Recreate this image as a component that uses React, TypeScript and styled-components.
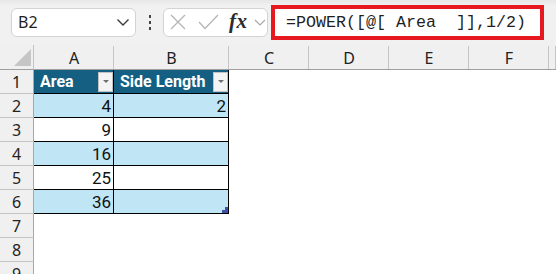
import { FC, Fragment } from "react";
import styled, { createGlobalStyle } from "styled-components";

const GlobalStyle = createGlobalStyle`
  html, body {
    margin: 0;
    padding: 0;
    background: #ffffff;
    overflow: hidden;
  }
`;

const Page = styled.div`
  width: 556px;
  height: 274px;
  overflow: hidden;
  display: flex;
  flex-direction: column;
  background: #ffffff;
  font-family: "Noto Sans", "Open Sans", sans-serif;
`;

const Toolbar = styled.div`
  height: 45px;
  flex: none;
  box-sizing: border-box;
  padding: 0 0 1px 11px;
  display: flex;
  align-items: center;
  background: linear-gradient(#e7e7e7 0, #f1f1f1 6px, #f1f1f1 100%);
`;

const NameBox = styled.div`
  width: 125px;
  height: 29px;
  box-sizing: border-box;
  border: 1px solid #d3d3d3;
  border-radius: 6px;
  background: #ffffff;
  display: flex;
  align-items: center;
  justify-content: space-between;
  padding: 0 5px 0 6px;
  font-size: 16px;
  color: #1f1f1f;
`;

const Kebab = styled.div`
  display: flex;
  flex-direction: column;
  gap: 3px;
  margin: 0 12px 0 13px;

  span {
    width: 2px;
    height: 3px;
    background: #444444;
  }
`;

const FormulaTools = styled.div`
  width: 105px;
  height: 29px;
  box-sizing: border-box;
  border: 1px solid #d3d3d3;
  border-radius: 6px;
  background: #ffffff;
  display: flex;
  align-items: center;
  padding-left: 6px;
`;

const ToolIcon = styled.svg<{ $gap: number }>`
  flex: none;
  margin-right: ${(p) => p.$gap}px;
`;

const FxLabel = styled.span`
  font-family: "Liberation Serif", "DejaVu Serif", serif;
  font-style: italic;
  font-weight: bold;
  font-size: 21px;
  line-height: 1;
  color: #2b2b2b;
  margin: 0 6px 2px 0;
  letter-spacing: 0.5px;
`;

const FormulaInput = styled.div`
  width: 273px;
  height: 35px;
  margin-left: 3px;
  box-sizing: border-box;
  border: 4px solid #e5191f;
  background: #ffffff;
  display: flex;
  align-items: center;
  padding-left: 11px;
  font-family: "Liberation Mono", "DejaVu Sans Mono", monospace;
  font-size: 16.67px;
  color: #1f1f1f;
  white-space: pre;
`;

const Sheet = styled.div`
  flex: 1;
  display: grid;
  grid-template-columns: 34px 80px 115px 80px 80px 80px 80px 1fr;
  grid-template-rows: 25px;
  grid-auto-rows: 24px;
  font-family: "Noto Sans", "Open Sans", sans-serif;
`;

const Corner = styled.div`
  box-sizing: border-box;
  background: #f0f0f0;
  border-right: 1px solid #c4c4c4;
  border-bottom: 1px solid #9e9e9e;
  display: flex;
  align-items: flex-end;
  justify-content: flex-end;
  padding: 0 2px 3px 0;
`;

const ColHeader = styled.div`
  box-sizing: border-box;
  background: #f0f0f0;
  border-bottom: 1px solid #9e9e9e;
  display: flex;
  align-items: center;
  justify-content: center;
  position: relative;
  font-size: 16px;
  color: #222222;
  padding-top: 1px;

  &::after {
    content: "";
    position: absolute;
    right: 0;
    top: 1px;
    bottom: 0;
    width: 1px;
    background: #c6c6c6;
  }
`;

const RowHeader = styled.div`
  box-sizing: border-box;
  background: #f0f0f0;
  border-right: 1px solid #a8a8a8;
  border-bottom: 1px solid #c6c6c6;
  display: flex;
  align-items: center;
  justify-content: center;
  font-size: 16px;
  color: #222222;
`;

type Band = "header" | "light" | "white";

const bandColor: Record<Band, string> = {
  header: "#156082",
  light: "#c0e6f5",
  white: "#ffffff",
};

const TableCell = styled.div<{ $band: Band }>`
  box-sizing: border-box;
  position: relative;
  background: ${(p) => bandColor[p.$band]};
  border-right: 1px solid #000000;
  border-bottom: 1px solid #000000;
  display: flex;
  align-items: center;
  justify-content: ${(p) => (p.$band === "header" ? "space-between" : "flex-end")};
  padding: ${(p) => (p.$band === "header" ? "0 0 0 6px" : "0 2px 0 0")};
  font-family: Roboto, "Noto Sans", sans-serif;
  font-size: ${(p) => (p.$band === "header" ? 16 : 17)}px;
  font-weight: ${(p) => (p.$band === "header" ? 700 : 400)};
  color: ${(p) => (p.$band === "header" ? "#ffffff" : "#111111")};
  white-space: nowrap;
`;

const FilterButton = styled.div`
  width: 15px;
  height: 20px;
  box-sizing: border-box;
  flex: none;
  background: #f4f4f4;
  border: 1px solid #c2c2c2;
  display: flex;
  align-items: center;
  justify-content: center;

  &::before {
    content: "";
    border-left: 3px solid transparent;
    border-right: 3px solid transparent;
    border-top: 3px solid #6e6e6e;
  }
`;

const EmptyCell = styled.div`
  background: #ffffff;
`;

const ResizeHandle = styled.svg`
  position: absolute;
  right: 0;
  bottom: 0;
`;

const rows: { band: Band; area: string; side: string }[] = [
  { band: "light", area: "4", side: "2" },
  { band: "white", area: "9", side: "" },
  { band: "light", area: "16", side: "" },
  { band: "white", area: "25", side: "" },
  { band: "light", area: "36", side: "" },
];

const columns = ["A", "B", "C", "D", "E", "F", ""];

const Empties: FC<{ count: number }> = ({ count }) => (
  <>
    {Array.from({ length: count }).map((_, i) => (
      <EmptyCell key={i} />
    ))}
  </>
);

export default function App() {
  return (
    <Page>
      <GlobalStyle />
      <Toolbar>
        <NameBox>
          <span>B2</span>
          <svg width="14" height="9" viewBox="0 0 14 9">
            <polyline points="1.5,1.5 7,7 12.5,1.5" fill="none" stroke="#3a3a3a" strokeWidth="1.4" />
          </svg>
        </NameBox>
        <Kebab>
          <span />
          <span />
          <span />
        </Kebab>
        <FormulaTools>
          <ToolIcon $gap={12} width="16" height="16" viewBox="0 0 16 16">
            <path d="M1 1 L15 15 M15 1 L1 15" stroke="#b5b5b5" strokeWidth="1.3" fill="none" />
          </ToolIcon>
          <ToolIcon $gap={10} width="21" height="16" viewBox="0 0 21 16">
            <polyline points="1,8 7,14.5 20,1" stroke="#b5b5b5" strokeWidth="1.3" fill="none" />
          </ToolIcon>
          <FxLabel>fx</FxLabel>
          <ToolIcon $gap={0} width="12" height="7" viewBox="0 0 12 7">
            <polyline points="1,1 6,6 11,1" stroke="#a8a8a8" strokeWidth="1.2" fill="none" />
          </ToolIcon>
        </FormulaTools>
        <FormulaInput>=POWER([@[ Area  ]],1/2)</FormulaInput>
      </Toolbar>
      <Sheet>
        <Corner>
          <svg width="17" height="17" viewBox="0 0 17 17">
            <polygon points="17,0 17,17 0,17" fill="#c6c6c6" />
          </svg>
        </Corner>
        {columns.map((c, i) => (
          <ColHeader key={i}>{c}</ColHeader>
        ))}

        <RowHeader>1</RowHeader>
        <TableCell $band="header">
          Area
          <FilterButton />
        </TableCell>
        <TableCell $band="header">
          Side Length
          <FilterButton />
        </TableCell>
        <Empties count={5} />

        {rows.map((r, i) => (
          <Fragment key={i}>
            <RowHeader>{i + 2}</RowHeader>
            <TableCell $band={r.band}>{r.area}</TableCell>
            <TableCell $band={r.band}>
              {r.side}
              {i === rows.length - 1 && (
                <ResizeHandle width="6" height="6" viewBox="0 0 6 6">
                  <path d="M3 0 H6 V6 H0 V3 H3 Z" fill="#3f4fa8" />
                </ResizeHandle>
              )}
            </TableCell>
            <Empties count={5} />
          </Fragment>
        ))}

        {[7, 8, 9].map((n) => (
          <Fragment key={n}>
            <RowHeader>{n}</RowHeader>
            <Empties count={7} />
          </Fragment>
        ))}
      </Sheet>
    </Page>
  );
}
